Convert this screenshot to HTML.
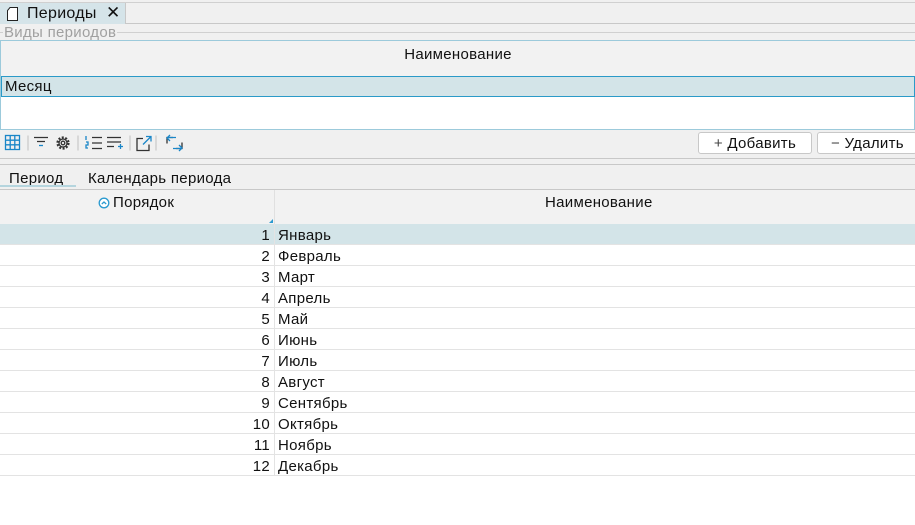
<!DOCTYPE html><html><head><meta charset="utf-8"><style>
*{margin:0;padding:0;box-sizing:border-box}
body{width:915px;height:525px;background:#fff;font-family:"Liberation Sans","DejaVu Sans",sans-serif;font-size:15px;letter-spacing:0.3px;color:#111;position:relative;overflow:hidden}
.a{position:absolute}
.g{background:#f0f0f0}
</style></head><body>
<div class="a g" style="left:0;top:0;width:915px;height:224px"></div>
<div class="a" style="left:0;top:2px;width:915px;height:1px;background:#d0d0d0"></div>
<div class="a" style="left:0;top:3px;width:126px;height:21px;background:#d5e4e9;border-right:1px solid #c8c8c8"></div>
<div class="a" style="left:126px;top:23px;width:789px;height:1px;background:#c8c8c8"></div>
<svg class="a" style="left:7px;top:7px" width="12" height="14"><path d="M3 .5h7.5v13h-10v-10z" fill="#fff" stroke="#222"/></svg>
<div class="a" style="left:27px;top:5px;font-size:16px">Периоды</div>
<div class="a" style="left:106px;top:3px;font-size:17px">✕</div>
<div class="a" style="left:0;top:32px;width:915px;height:1px;background:#d0d0d0"></div>
<div class="a g" style="left:3px;top:24px;padding:0 1px;color:#a0a0a0">Виды периодов</div>
<div class="a" style="left:0;top:40px;width:915px;height:90px;border:1px solid #9ccadb;background:#fff"></div>
<div class="a" style="left:1px;top:41px;width:914px;height:35px;background:#f2f2f2;text-align:center;line-height:27px">Наименование</div>
<div class="a" style="left:1px;top:76px;width:914px;height:21px;background:#d3e4e8;border:1px solid #2a9ac8;padding-left:3px;line-height:20px">Месяц</div>
<svg class="a" style="left:0;top:130px" width="200" height="26" fill="none" stroke-width="1.3">
<g stroke="#1a86c8"><rect x="5.5" y="5.5" width="14" height="14"/><path d="M10.2 5.5v14M14.8 5.5v14M5.5 10.2h14M5.5 14.8h14"/></g>
<path d="M28 5.5v15M78 5.5v15M130 5.5v15M156 5.5v15" stroke="#ccc"/>
<g stroke="#333"><path d="M34 7.5h14M37 11.5h8"/></g><path d="M39 15.5h4" stroke="#1a86c8"/>
<circle cx="63" cy="13" r="5.5" stroke="#333" stroke-width="2.2" stroke-dasharray="2 1.5"/><circle cx="63" cy="13" r="4" stroke="#333"/><circle cx="63" cy="13" r="1.8" stroke="#333"/>
<g stroke="#333"><path d="M92 7.5h10M92 13h10M92 18.5h10M107 7.5h14M107 12h14M107 16.5h7"/></g>
<path d="M86 6v4M86 12h2v3h-2v3h2" stroke="#1a86c8"/><path d="M118 16.5h5M120.5 14v5" stroke="#1a86c8"/>
<path d="M143 8.5h-6v12h12v-6" stroke="#333"/><path d="M143 14.5l8-8M146 6.5h5v5" stroke="#1a86c8"/>
<path d="M173 7.5h-6v6M176 18.5h6v-6" stroke="#333"/><path d="M170 11l-3-3 3-3M179 21l3-3-3-3M168 7.5h8M181 18.5h-8" stroke="#1a86c8"/>
</svg>
<div class="a" style="left:698px;top:132px;width:114px;height:22px;background:#fff;border:1px solid #c8c8c8;border-radius:3px;text-align:center;line-height:21px"><span style="color:#444">+</span> Добавить</div>
<div class="a" style="left:817px;top:132px;width:100px;height:22px;background:#fff;border:1px solid #c8c8c8;border-radius:3px;padding-left:13px;line-height:21px"><span style="color:#444">−</span> Удалить</div>
<div class="a" style="left:0;top:158px;width:915px;height:1px;background:#c8c8c8"></div>
<div class="a" style="left:0;top:164px;width:915px;height:1px;background:#c8c8c8"></div>
<div class="a" style="left:9px;top:170px">Период</div>
<div class="a" style="left:88px;top:170px">Календарь периода</div>
<div class="a" style="left:0;top:185px;width:76px;height:2px;background:#b5d5de"></div>
<div class="a" style="left:0;top:189px;width:915px;height:1px;background:#c8c8c8"></div>
<div class="a" style="left:0;top:190px;width:915px;height:34px;background:#f2f2f2"></div>
<div class="a" style="left:274px;top:190px;width:1px;height:34px;background:#e0e0e0"></div>
<svg class="a" style="left:98px;top:197px" width="12" height="12"><circle cx="6" cy="6" r="4.8" fill="#fff" stroke="#2a9ad0" stroke-width="1.3"/><path d="M3.8 7l2.2-2 2.2 2" fill="none" stroke="#2a9ad0" stroke-width="1.3"/></svg>
<div class="a" style="left:113px;top:194px">Порядок</div>
<div class="a" style="left:545px;top:194px">Наименование</div>
<svg class="a" style="left:269px;top:219px" width="4" height="4"><path d="M4 0v4H0z" fill="#2a9ad0"/></svg>
<div class="a" style="left:0;top:224px;width:915px">
<style>.r{height:21px;border-bottom:1px solid #e3e3e3;display:flex;line-height:23px}.r .n{width:275px;text-align:right;padding-right:4px;border-right:1px solid #e3e3e3}.r .t{padding-left:3px}</style>
<div class="r" style="background:#d3e4e8"><div class="n">1</div><div class="t">Январь</div></div>
<div class="r"><div class="n">2</div><div class="t">Февраль</div></div>
<div class="r"><div class="n">3</div><div class="t">Март</div></div>
<div class="r"><div class="n">4</div><div class="t">Апрель</div></div>
<div class="r"><div class="n">5</div><div class="t">Май</div></div>
<div class="r"><div class="n">6</div><div class="t">Июнь</div></div>
<div class="r"><div class="n">7</div><div class="t">Июль</div></div>
<div class="r"><div class="n">8</div><div class="t">Август</div></div>
<div class="r"><div class="n">9</div><div class="t">Сентябрь</div></div>
<div class="r"><div class="n">10</div><div class="t">Октябрь</div></div>
<div class="r"><div class="n">11</div><div class="t">Ноябрь</div></div>
<div class="r"><div class="n">12</div><div class="t">Декабрь</div></div>
</div>
</body></html>
